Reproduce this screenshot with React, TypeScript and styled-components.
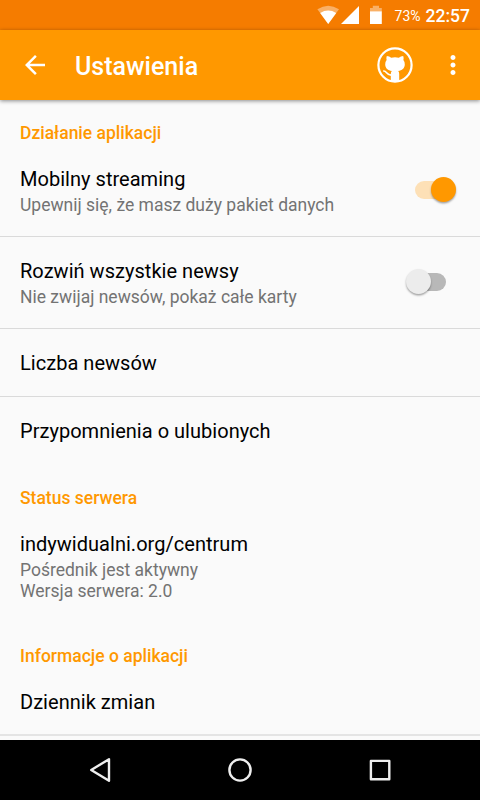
import React from "react";
import styled, { createGlobalStyle } from "styled-components";

const GlobalStyle = createGlobalStyle`
  *, *::before, *::after { box-sizing: border-box; }
  html, body { margin: 0; padding: 0; }
  body { font-family: Roboto, "Noto Sans", sans-serif; background: #fafafa; overflow: hidden; }
`;

const Screen = styled.div`
  width: 480px;
  height: 800px;
  display: flex;
  flex-direction: column;
  background: #fafafa;
  overflow: hidden;
`;

const StatusBar = styled.div`
  flex: 0 0 30px;
  height: 30px;
  min-height: 0;
  display: flex;
  align-items: center;
  justify-content: flex-end;
  padding-right: 10px;
  background: #f57c00;
  color: #fff;
`;

const StatusIcons = styled.svg`
  display: block;
  margin-right: 12px;
`;

const Battery = styled.span`
  font-size: 14px;
  line-height: 20px;
  margin-right: 5px;
  padding-top: 1px;
`;

const Clock = styled.span`
  font-size: 17.5px;
  font-weight: 500;
  line-height: 20px;
  padding-top: 2px;
`;

const Toolbar = styled.header`
  flex: 0 0 70px;
  display: flex;
  align-items: center;
  padding: 0 12px 0 20px;
  background: #ff9800;
  color: #fff;
  box-shadow: 0 1px 4px rgba(0, 0, 0, 0.45);
  z-index: 1;

  svg { display: block; }
`;

const ToolbarTitle = styled.h1`
  flex: 1;
  margin: 3px 0 0 25px;
  font-size: 25px;
  font-weight: 500;
  line-height: 30px;
`;

const OverflowIcon = styled.svg`
  margin-left: 25px;
`;

const Content = styled.main`
  flex: 1;
  min-height: 0;
  overflow: hidden;
`;

const Category = styled.h2`
  margin: 0;
  padding: 23px 20px 0;
  color: #ff9800;
  font-size: 17.5px;
  font-weight: 500;
  line-height: 21px;
`;

const Row = styled.div<{ $height: number; $top: number; $line?: number }>`
  display: flex;
  justify-content: space-between;
  height: ${(p) => p.$height}px;
  padding: ${(p) => p.$top}px 20px 0;
  border-bottom: ${(p) => p.$line ?? 0}px solid ${(p) => (p.$line === 2 ? "#e4e4e4" : "#dadada")};
`;

const Title = styled.div`
  color: #000;
  font-size: 20px;
  line-height: 24px;
  letter-spacing: 0.03px;
  white-space: nowrap;
`;

const Summary = styled.div`
  margin-top: 4px;
  color: #737373;
  font-size: 17.5px;
  line-height: 20.5px;
  white-space: pre-line;
`;

const Track = styled.div<{ $on: boolean }>`
  position: relative;
  width: 31px;
  height: 18px;
  margin: 14px 14px 0 0;
  border-radius: 9px;
  background: ${(p) => (p.$on ? "#fde0b6" : "#b8b8b8")};

  &::after {
    content: "";
    position: absolute;
    top: -4px;
    left: ${(p) => (p.$on ? 15.5 : -9.5)}px;
    width: 25px;
    height: 25px;
    border-radius: 50%;
    background: ${(p) => (p.$on ? "#ff9800" : "#ececec")};
    box-shadow: 0 1.5px 2px rgba(0, 0, 0, 0.35);
  }
`;

const NavBar = styled.nav`
  flex: 0 0 60px;
  display: flex;
  justify-content: center;
  align-items: center;
  gap: 110px;
  background: #000;

  svg { display: block; fill: none; stroke: #eee; stroke-width: 2.4; stroke-linejoin: round; }
`;

type PreferenceProps = {
  title: string;
  summary?: string;
  checked?: boolean;
  height: number;
  top: number;
  line?: number;
};

function Preference({ title, summary, checked, height, top, line }: PreferenceProps) {
  return (
    <Row $height={height} $top={top} $line={line}>
      <div>
        <Title>{title}</Title>
        {summary && <Summary>{summary}</Summary>}
      </div>
      {checked !== undefined && <Track $on={checked} role="switch" aria-checked={checked} />}
    </Row>
  );
}

function GithubBadge() {
  return (
    <svg width="36" height="36" viewBox="0 0 36 36">
      <circle cx="18" cy="18" r="16.6" fill="none" stroke="#fff" strokeWidth="2.2" />
      <path
        fill="#fff"
        d="M9.8 9Q12.4 9.2 14.2 10.7Q18 9.9 21.8 10.7Q23.8 9.2 26.2 9Q27 11 26.4 13Q28 14.9 27.8 17.6C27.6 21.6 25 23.5 21.2 24Q22.2 25.2 22.2 27V34.4Q18 35.8 13.8 34.4V27Q13.8 25.2 14.8 24C11 23.5 8.4 21.6 8.2 17.6Q8 14.9 9.6 13Q9 11 9.8 9Z"
      />
      <path d="M6.8 24C9.8 23.9 9.6 28.6 14.6 28.2" fill="none" stroke="#fff" strokeWidth="1.7" strokeLinecap="round" />
    </svg>
  );
}

export default function App() {
  return (
    <>
      <GlobalStyle />
      <Screen>
        <StatusBar>
          <StatusIcons width="66" height="20" viewBox="0 0 66 20" fill="#fff">
            <path d="M0.4 4.2Q11.2-2.8 22 4.2L11.2 19Z" opacity="0.4" />
            <path d="M3.2 8Q11.2 3.2 19.2 8L11.2 19Z" />
            <path d="M42 1V19H24Z" />
            <path d="M53 3h2.8V.8h6.2V3h2.8v3.5H53Z" opacity="0.4" />
            <path d="M53 6.3h11.8V19H53Z" />
          </StatusIcons>
          <Battery>73%</Battery>
          <Clock>22:57</Clock>
        </StatusBar>
        <Toolbar>
          <svg width="30" height="30" viewBox="0 0 24 24" fill="#fff">
            <path d="M20 11H7.83l5.59-5.59L12 4l-8 8 8 8 1.41-1.41L7.83 13H20v-2z" />
          </svg>
          <ToolbarTitle>Ustawienia</ToolbarTitle>
          <GithubBadge />
          <OverflowIcon width="30" height="30" viewBox="0 0 24 24" fill="#fff">
            <path d="M12 8c1.1 0 2-.9 2-2s-.9-2-2-2-2 .9-2 2 .9 2 2 2zm0 2c-1.1 0-2 .9-2 2s.9 2 2 2 2-.9 2-2-.9-2-2-2zm0 6c-1.1 0-2 .9-2 2s.9 2 2 2 2-.9 2-2-.9-2-2-2z" />
          </OverflowIcon>
        </Toolbar>
        <Content>
          <Category>Działanie aplikacji</Category>
          <Preference title="Mobilny streaming" summary="Upewnij się, że masz duży pakiet danych" checked height={93} top={23} line={1} />
          <Preference title="Rozwiń wszystkie newsy" summary="Nie zwijaj newsów, pokaż całe karty" checked={false} height={92} top={22} line={1} />
          <Preference title="Liczba newsów" height={68} top={22} line={1} />
          <Preference title="Przypomnienia o ulubionych" height={68} top={22} />
          <Category>Status serwera</Category>
          <Preference title="indywidualni.org/centrum" summary={"Pośrednik jest aktywny\nWersja serwera: 2.0"} height={114} top={23} />
          <Category>Informacje o aplikacji</Category>
          <Preference title="Dziennik zmian" height={69} top={23} line={2} />
        </Content>
        <NavBar>
          <svg width="30" height="30" viewBox="0 0 30 30"><path d="M24 4.2V25.8L6.2 15Z" /></svg>
          <svg width="30" height="30" viewBox="0 0 30 30"><circle cx="15" cy="15" r="10.6" /></svg>
          <svg width="30" height="30" viewBox="0 0 30 30"><rect x="5.9" y="5.9" width="18.4" height="18.4" /></svg>
        </NavBar>
      </Screen>
    </>
  );
}
